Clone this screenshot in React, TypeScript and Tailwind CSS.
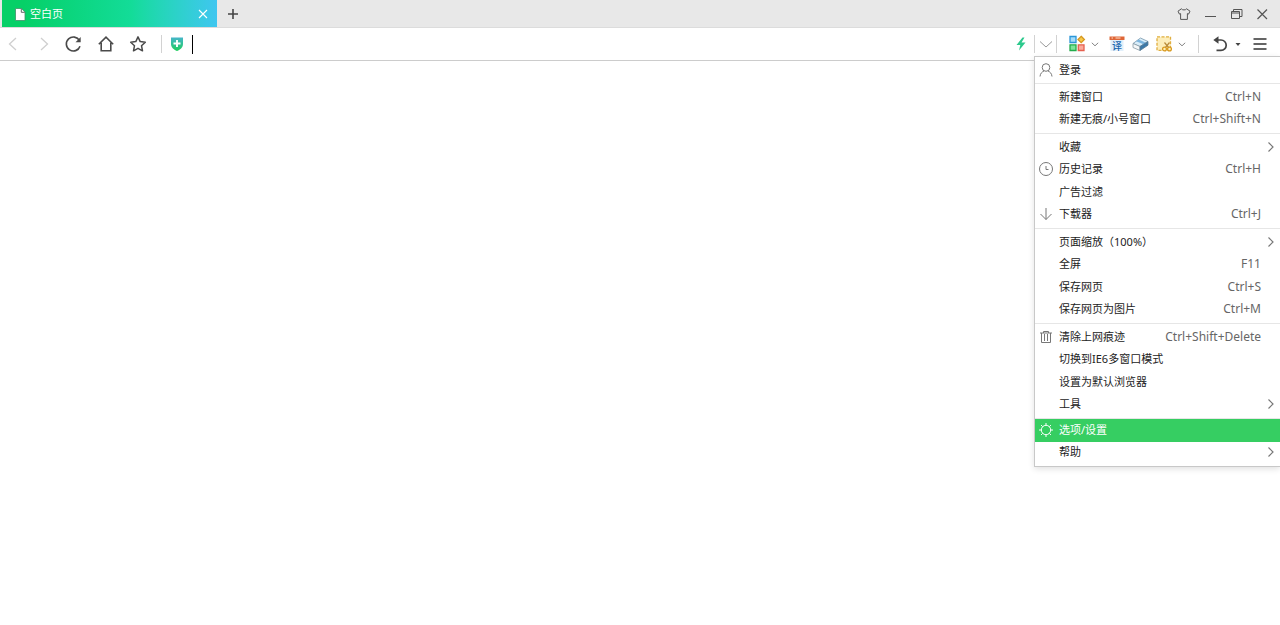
import React from "react";

type IconProps = { children: React.ReactNode; className?: string; size?: "sm" | "md" };

function Icon({ children, className = "", size = "md" }: IconProps) {
  const box = size === "sm" ? "size-4" : "size-5";
  return (
    <svg
      viewBox={size === "sm" ? "0 0 16 16" : "0 0 20 20"}
      className={`${box} shrink-0 ${className}`}
      fill="none"
      stroke="currentColor"
      aria-hidden="true"
    >
      {children}
    </svg>
  );
}

type ButtonProps = { label: string; className?: string; children: React.ReactNode };

function IconButton({ label, className = "", children }: ButtonProps) {
  return (
    <button type="button" aria-label={label} className={`flex h-6 shrink-0 items-center justify-center ${className}`}>
      {children}
    </button>
  );
}

function Divider({ className = "" }: { className?: string }) {
  return <span className={`h-[18px] w-px shrink-0 bg-[#d2d2d2] ${className}`} />;
}

function SmallChevron() {
  return (
    <Icon size="sm" className="text-[#858585]">
      <path d="M4.8 6.8 8 9.8l3.2-3" />
    </Icon>
  );
}

function TabBar() {
  return (
    <header className="flex h-7 items-stretch border-b border-[#dcdcdc] bg-[#e8e8e8] pr-[5px] pl-0.5">
      <div className="flex w-[215px] items-center bg-linear-to-r from-[#06d067] from-10% via-[#13dc98] via-60% to-[#3fc6f0] pr-[5px] pl-2.5 text-white">
        <Icon size="sm">
          <path d="M3.5 2.5h6l3.500 3.600v8.400H3.500z" fill="#fff" stroke="#3f8f68" strokeWidth=".8" />
          <path d="M9.300 2.700v3.600h3.500" stroke="#555" strokeWidth=".9" />
        </Icon>
        <span className="ml-0.5 text-[11px] leading-4">空白页</span>
        <IconButton label="关闭标签页" className="ml-auto w-[18px]">
          <Icon size="sm">
            <path d="m4 4 8 8M12 4l-8 8" strokeWidth="1.1" />
          </Icon>
        </IconButton>
      </div>
      <IconButton label="新建标签页" className="mt-0.5 w-8 text-[#444]">
        <Icon size="sm">
          <path d="M8 3v10M3 8h10" strokeWidth="1.6" />
        </Icon>
      </IconButton>
      <div className="mt-0.5 ml-auto flex text-[#555]">
        <IconButton label="皮肤" className="w-[26px]">
          <Icon size="sm">
            <path
              d="M5.4 2.8 2 5.2l1.4 2.9 1.2-.5v5.8h6.8V7.6l1.2.5L14 5.2l-3.4-2.4C9.8 4.3 6.2 4.3 5.4 2.8z"
              strokeLinejoin="round"
            />
          </Icon>
        </IconButton>
        <IconButton label="最小化" className="w-[26px]">
          <Icon size="sm">
            <path d="M3 10.5h11" />
          </Icon>
        </IconButton>
        <IconButton label="还原" className="w-[26px]">
          <Icon size="sm">
            <path d="M3.5 5.5h8v7h-8zM3.5 7h8M5.500 5.500v-2h8.500v7h-2.500" />
          </Icon>
        </IconButton>
        <IconButton label="关闭" className="w-[26px]">
          <Icon size="sm">
            <path d="m3.500 3.500 9.500 9.500M13 3.500 3.500 13" strokeWidth="1.2" />
          </Icon>
        </IconButton>
      </div>
    </header>
  );
}

function Toolbar() {
  return (
    <div className="flex h-[33px] items-center border-b border-[#ccc] bg-white pr-2.5 pl-[3px]">
      <nav className="flex items-center gap-[11px] text-[#4a4a4a]">
        <IconButton label="后退" className="w-5 text-[#cfcfcf]">
          <Icon>
            <path d="m13 4-6.500 6 6.500 6" strokeWidth="1.3" />
          </Icon>
        </IconButton>
        <IconButton label="前进" className="w-5 text-[#cfcfcf]">
          <Icon>
            <path d="m7 4 6.500 6L7 16" strokeWidth="1.3" />
          </Icon>
        </IconButton>
        <IconButton label="刷新" className="w-5">
          <Icon>
            <path d="M14.500 6.700A7 7 0 1 0 15 12.200" strokeWidth="1.6" />
            <path d="M15.700 3v5.200h-5.200z" fill="currentColor" stroke="none" />
          </Icon>
        </IconButton>
        <IconButton label="主页" className="w-5">
          <Icon>
            <path d="M2.800 10.200 10 3.200l7.200 7M5.200 8.800v8h9.600v-8" strokeWidth="1.6" />
          </Icon>
        </IconButton>
        <IconButton label="收藏" className="w-5">
          <Icon>
            <path
              d="m11 2.900 2.200 4.700 5.100.6-3.800 3.500 1 5.100-4.500-2.500-4.500 2.500 1-5.100-3.800-3.500 5.100-.6z"
              strokeWidth="1.5"
              strokeLinejoin="round"
            />
          </Icon>
        </IconButton>
      </nav>
      <Divider className="ml-3.5" />
      <IconButton label="网站安全" className="ml-[5px] w-5">
        <Icon>
          <defs>
            <linearGradient id="shield" x1="0" y1="0" x2="0" y2="1">
              <stop offset="0" stopColor="#45b6c9" />
              <stop offset="1" stopColor="#1fce5c" />
            </linearGradient>
          </defs>
          <path d="M4 3.500h12V10c0 3.400-2.500 5.400-6 7-3.500-1.600-6-3.600-6-7z" fill="url(#shield)" stroke="none" />
          <path d="M10 6v7M6.500 9.500h7" stroke="#fff" strokeWidth="1.9" />
        </Icon>
      </IconButton>
      <label className="ml-[5px] flex min-w-0 flex-1 items-center">
        <span className="h-[19px] w-px shrink-0 bg-black" />
        <input type="text" aria-label="地址" className="h-6 w-full min-w-0 bg-transparent px-1 text-[11px] outline-none" />
      </label>
      <IconButton label="极速模式" className="w-[26px]">
        <Icon>
          <path d="M11.500 3.500 5.500 11h3.800l-1.300 5.500L14.500 8.600h-4l3-5.100z" fill="#2cc98c" stroke="none" />
        </Icon>
      </IconButton>
      <Divider />
      <IconButton label="历史地址" className="w-[21px] text-[#999]">
        <Icon>
          <path d="m4 7.500 6 5.500 6-5.500" />
        </Icon>
      </IconButton>
      <Divider />
      <IconButton label="扩展" className="ml-2.5 w-5">
        <Icon>
          <path d="M3 2.500h6v6H3z" fill="#a5dcfa" stroke="#2c96d8" strokeWidth="1.3" />
          <path d="M3 10.800h6v5.700H3z" fill="#7de59a" stroke="#23ab4c" strokeWidth="1.3" />
          <path d="M11.300 10.800h5.700v5.700h-5.700z" fill="#fbaa9a" stroke="#e5604f" strokeWidth="1.3" />
          <path d="m14.200 2.300 3.200 3.200-3.200 3.200L11 5.500z" fill="#f7c94b" stroke="#d6981f" strokeWidth="1.3" />
        </Icon>
      </IconButton>
      <IconButton label="更多扩展" className="w-4">
        <SmallChevron />
      </IconButton>
      <IconButton label="翻译" className="ml-1 w-5">
        <Icon>
          <path d="M3.500 6h13v11h-13z" fill="#e1effa" stroke="none" />
          <path d="M2.500 2.500h15v3.500h-15z" fill="#df6637" stroke="none" />
          <path d="M4.500 4H6M8.500 4h5" stroke="#ffe0c8" />
          <text x="10" y="15.800" textAnchor="middle" fontSize="10" fontWeight="500" fill="#1764ad" stroke="none">
            译
          </text>
        </Icon>
      </IconButton>
      <IconButton label="清理" className="ml-[3px] w-5">
        <Icon>
          <path d="m3 9.500 7.500-5.500L18 7.500l-8 5z" fill="#d9edf9" stroke="#7898ac" strokeWidth=".8" />
          <path d="m6 7.300 7.600 3 2.400-1.500-7.300-3.400z" fill="#7db6df" stroke="none" />
          <path d="m3 9.500 7 3v4l-7-3z" fill="#f5f7f8" stroke="#8799a5" strokeWidth=".8" />
          <path d="m10 12.500 8-5v3.700l-8 5.300z" fill="#3c79a8" stroke="#5a7b93" strokeWidth=".8" />
        </Icon>
      </IconButton>
      <IconButton label="截图" className="ml-1 w-5">
        <Icon>
          <path d="M3 2.800h13.500v13.500H3z" fill="#fdeebb" stroke="#e0ae40" strokeWidth="1.3" strokeDasharray="3 1.500" />
          <path d="m10.500 8.500 4.500 5.500M15.500 8.500l-4.500 5.500" stroke="#b98a3a" strokeWidth="1.2" />
          <circle cx="10.500" cy="15" r="1.900" fill="#fff0bd" stroke="#d89a20" strokeWidth="1.3" />
          <circle cx="15.500" cy="15" r="1.900" fill="#fff0bd" stroke="#d89a20" strokeWidth="1.3" />
        </Icon>
      </IconButton>
      <IconButton label="截图选项" className="w-4">
        <SmallChevron />
      </IconButton>
      <Divider className="ml-2" />
      <IconButton label="恢复标签页" className="ml-[11px] w-5 text-[#444]">
        <Icon>
          <path d="M6 6h5a5.200 5.200 0 0 1 0 10.400H6.500" strokeWidth="1.7" />
          <path d="M8.500 2.200v7.600L3.300 6z" fill="currentColor" stroke="none" />
        </Icon>
      </IconButton>
      <IconButton label="最近关闭" className="w-4 text-[#444]">
        <Icon size="sm">
          <path d="M5.500 7h5L8 10z" fill="currentColor" stroke="none" />
        </Icon>
      </IconButton>
      <IconButton label="菜单" className="ml-1 w-5 text-[#333]">
        <Icon>
          <path d="M3.500 5h13M3.500 10h13M3.500 15h13" strokeWidth="1.7" />
        </Icon>
      </IconButton>
    </div>
  );
}

const userIcon = (
  <>
    <circle cx="8" cy="5.500" r="3.800" />
    <path d="M2 14.500c.3-3.200 2.200-4.800 4-5.500M14 14.500c-.3-3.200-2.200-4.800-4-5.500" />
  </>
);
const clockIcon = (
  <>
    <circle cx="8" cy="8" r="6.500" />
    <path d="M8 5v3.500h2.500" />
  </>
);
const downIcon = <path d="M8 2v11.500M2.500 8 8 13.500 13.500 8" />;
const trashIcon = <path d="M2 4h12M5.500 4V2.500h5V4M3.500 4v9.500h9V4M6.500 5v7M9.500 5v7" />;
const gearIcon = (
  <>
    <circle cx="8" cy="8" r="4.700" />
    <path d="M8 1v2.300M8 12.700V15M1 8h2.300M12.700 8H15M3.050 3.050l1.600 1.600M11.350 11.350l1.600 1.600M3.050 12.950l1.600-1.600M11.350 4.650l1.600-1.600" />
  </>
);

type Item = { text: string; keys?: string; icon?: React.ReactNode; sub?: boolean; active?: boolean };

const groups: { height: string; items: Item[] }[] = [
  { height: "min-h-[22px]", items: [{ text: "登录", icon: userIcon }] },
  {
    height: "min-h-[45px]",
    items: [
      { text: "新建窗口", keys: "Ctrl+N" },
      { text: "新建无痕/小号窗口", keys: "Ctrl+Shift+N" },
    ],
  },
  {
    height: "min-h-[90px]",
    items: [
      { text: "收藏", sub: true },
      { text: "历史记录", keys: "Ctrl+H", icon: clockIcon },
      { text: "广告过滤" },
      { text: "下载器", keys: "Ctrl+J", icon: downIcon },
    ],
  },
  {
    height: "min-h-[90px]",
    items: [
      { text: "页面缩放（100%）", sub: true },
      { text: "全屏", keys: "F11" },
      { text: "保存网页", keys: "Ctrl+S" },
      { text: "保存网页为图片", keys: "Ctrl+M" },
    ],
  },
  {
    height: "min-h-[90px]",
    items: [
      { text: "清除上网痕迹", keys: "Ctrl+Shift+Delete", icon: trashIcon },
      { text: "切换到IE6多窗口模式" },
      { text: "设置为默认浏览器" },
      { text: "工具", sub: true },
    ],
  },
  {
    height: "min-h-[45px]",
    items: [
      { text: "选项/设置", icon: gearIcon, active: true },
      { text: "帮助", sub: true },
    ],
  },
];

function MenuItem({ text, keys, icon, sub, active }: Item) {
  return (
    <button
      type="button"
      role="menuitem"
      className={`flex w-full items-center pr-[19px] pb-px pl-[3px] text-left text-[11px] leading-4 ${
        active ? "bg-[#36ce62] text-white" : "text-[#222]"
      }`}
    >
      <span className={`w-[21px] shrink-0 ${active ? "text-white" : "text-[#777]"}`}>
        {icon && <Icon size="sm">{icon}</Icon>}
      </span>
      <span className="whitespace-nowrap">{text}</span>
      {keys && <span className="ml-auto text-xs leading-4 whitespace-nowrap text-[#666]">{keys}</span>}
      {sub && (
        <Icon size="sm" className="-mr-[18px] ml-auto text-[#777]">
          <path d="m5.500 3.500 4.500 4.500-4.500 4.500" strokeWidth="1.2" />
        </Icon>
      )}
    </button>
  );
}

function MainMenu() {
  return (
    <div
      role="menu"
      className="absolute top-14 right-0 w-[246px] divide-y divide-[#e6e6e6] border-y border-l border-[#c8c8c8] bg-white shadow-[0_2px_6px_rgba(0,0,0,0.12)]"
    >
      {groups.map((group) => (
        <div key={group.items[0].text} className="py-0.5 last:pt-0">
          <div className={`grid auto-rows-fr ${group.height}`}>
            {group.items.map((item) => (
              <MenuItem key={item.text} {...item} />
            ))}
          </div>
        </div>
      ))}
    </div>
  );
}

export default function App() {
  return (
    <div className="relative min-h-screen bg-white font-['Noto_Sans','Noto_Sans_CJK_SC',sans-serif]">
      <TabBar />
      <Toolbar />
      <main />
      <MainMenu />
    </div>
  );
}
